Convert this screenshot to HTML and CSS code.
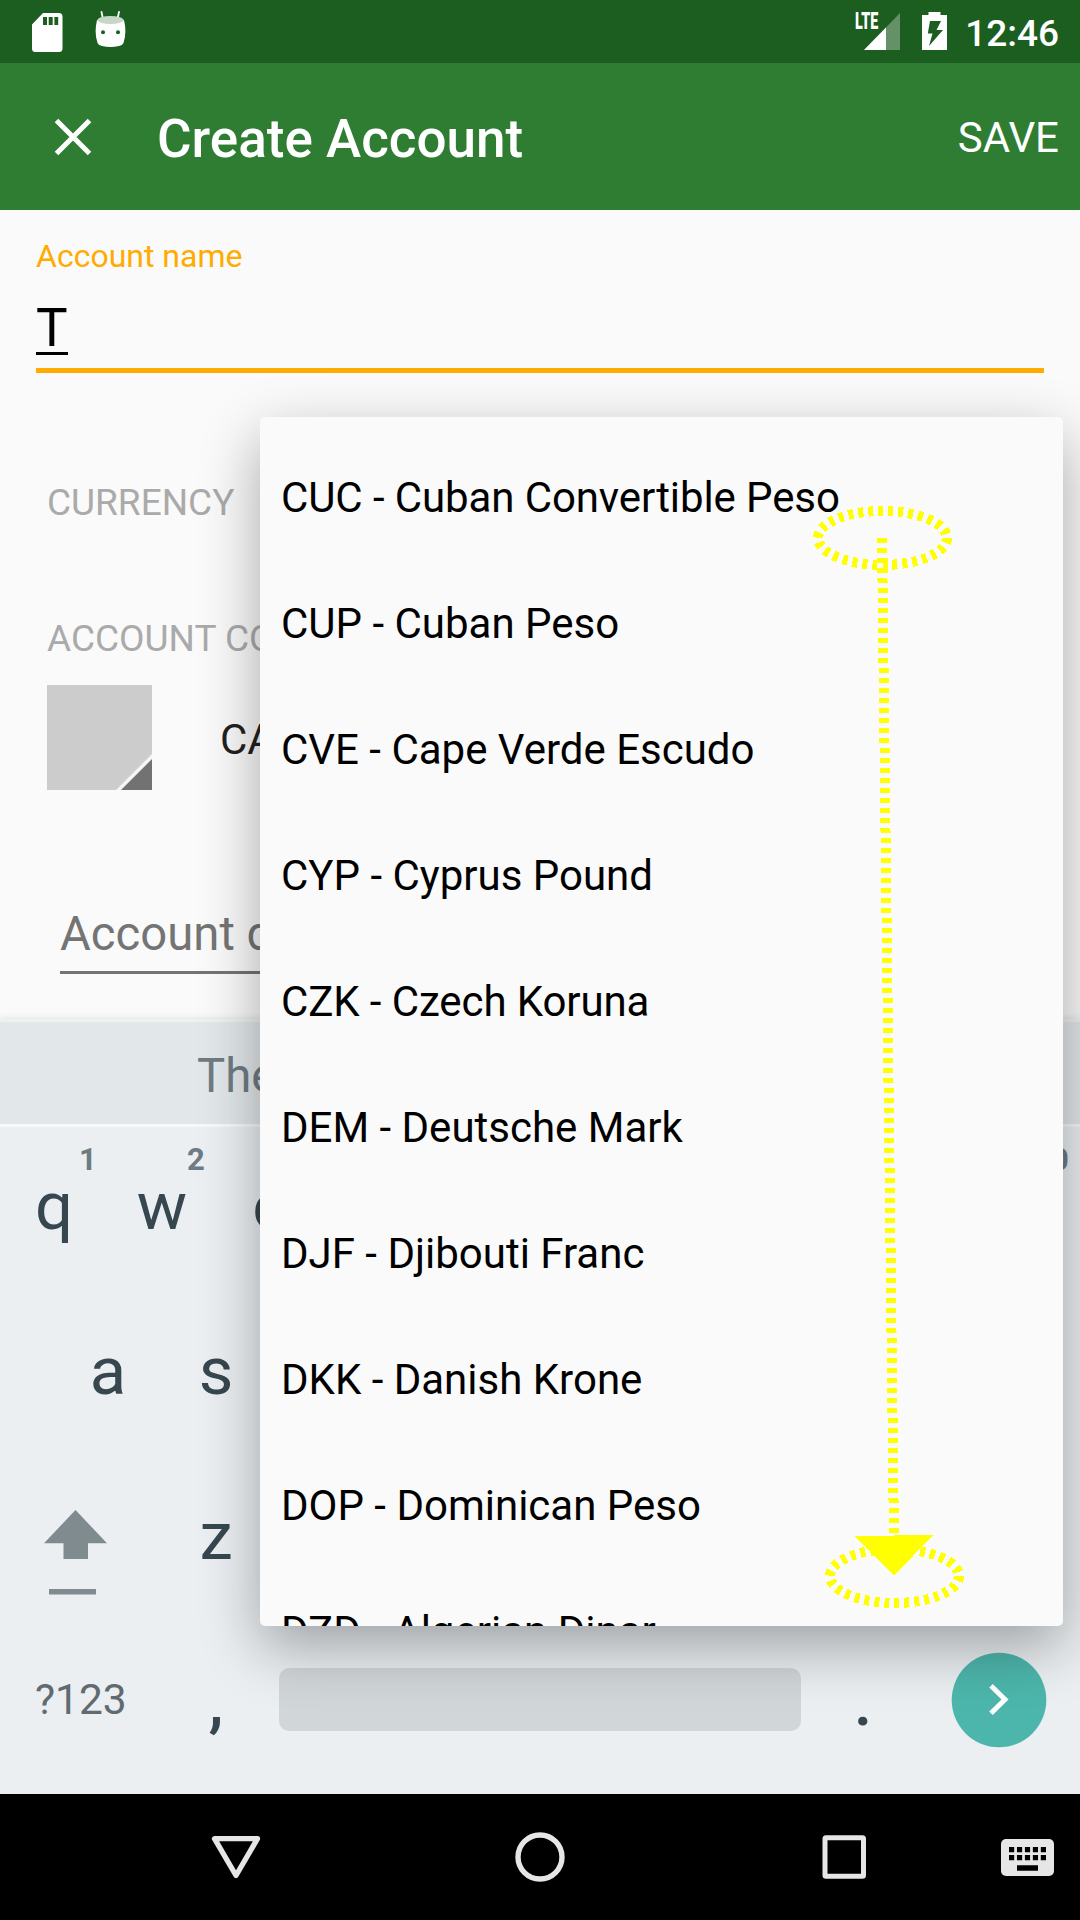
FILE: index.html
```html
<!DOCTYPE html>
<html lang="en">
<head>
<meta charset="utf-8">
<title>Create Account</title>
<link rel="stylesheet" href="styles.css">
</head>
<body>
<div class="screen">
  <header class="status">
    <div class="status-group notifications">
      <svg width="31" height="39" viewBox="0 0 31 39"><path fill="#fff" fill-rule="evenodd" d="M11 0H27Q30.500 0 30.500 3.500V35.500Q30.500 39 27 39H3.500Q0 39 0 35.500V11.500ZM11 4V12H15V4ZM16.700 4V12H20.700V4ZM22.400 4V12H26.200V4Z"/></svg>
      <svg width="31" height="37" viewBox="0 0 31 37"><path d="M6.500 1L8 8M24 1L22.500 8" stroke="#fff" stroke-width="1.800" stroke-linecap="round"/><path fill="#fff" d="M2 9Q15.500 14 29 9Q32 22 28.500 32Q27.500 34.500 24 35Q15.500 37 7 35Q3.500 34.500 2.500 32Q-1 22 2 9Z"/><ellipse cx="15.500" cy="9" rx="13" ry="4" fill="#c6d7c7"/><circle cx="8" cy="21.300" r="2" fill="#1b5e20"/><circle cx="23" cy="21.300" r="2" fill="#1b5e20"/></svg>
    </div>
    <div class="status-group system">
      <div class="signal">
        <svg width="36" height="37" viewBox="0 0 36 37"><path fill="#649167" d="M36 0V37H0Z"/><path fill="#fff" d="M22 14.400V37H0Z"/></svg>
        <span class="lte">LTE</span>
      </div>
      <svg class="battery" width="25" height="38" viewBox="0 0 25 38"><path fill="#fff" d="M6.500 0H18.500V3H25V38H0V3H6.500Z"/><path fill="#1b5e20" d="M8 9H19L14.500 18H21L7 34L10.500 21.500H5.800Z"/></svg>
      <span class="clock">12:46</span>
    </div>
  </header>

  <nav class="appbar">
    <svg class="close" width="38" height="38" viewBox="0 0 38 38"><path d="M2.500 2.500L35.500 35.500M35.500 2.500L2.500 35.500" stroke="#fff" stroke-width="5"/></svg>
    <h1 class="title">Create Account</h1>
    <span class="save">SAVE</span>
  </nav>

  <main class="form">
    <label class="name-label">Account name</label>
    <div class="name-field"><span class="name-value">T</span></div>
    <div class="section currency">CURRENCY</div>
    <div class="section color-label">ACCOUNT CO</div>
    <div class="type-row">
      <svg class="swatch" width="105" height="105" viewBox="0 0 105 105"><path fill="#ccc" d="M0 0H105V105H0Z"/><path fill="#f5f5f5" d="M105 69V105H69Z"/><path fill="#727272" d="M105 74V105H74Z"/></svg>
      <span class="type">CA</span>
    </div>
    <div class="description">Account d</div>
  </main>

  <section class="keyboard">
    <div class="suggestions"><span>The</span></div>
    <div class="keys row-q">
      <span class="key">q<sup>1</sup></span><span class="key">w<sup>2</sup></span><span class="key">e</span><span class="key last"><sup>0</sup></span>
    </div>
    <div class="keys row-a">
      <span class="key">a</span><span class="key">s</span>
    </div>
    <div class="keys row-z">
      <svg class="shift" width="162" height="90" viewBox="0 0 162 90"><path fill="#808b8f" d="M75.500 0L107 33.300H88V49H63.500V33.300H44ZM49 79H96V84.500H49Z"/></svg>
      <span class="key">z</span>
    </div>
    <div class="row-space">
      <span class="symbols">?123</span>
      <span class="key punct">,</span>
      <span class="space"></span>
      <span class="key punct">.</span>
      <svg class="enter" width="96" height="96" viewBox="0 0 96 96"><circle cx="48" cy="48" r="47.300" fill="#4db6ac"/><path d="M40 33.700L54 47.500L40 61.300" fill="none" stroke="#fff" stroke-width="5"/></svg>
    </div>
  </section>

  <footer class="navbar">
    <svg width="1080" height="126" viewBox="0 0 1080 126" fill="none" stroke="#e6e6e6">
      <path d="M214.500 44.700H257.500L236 81.500Z" stroke-width="5.300" stroke-linejoin="round"/>
      <circle cx="540" cy="63" r="22" stroke-width="5.400"/>
      <rect x="825" y="43.700" width="38.500" height="38.500" rx="1" stroke-width="5"/>
      <rect x="1001" y="45" width="53" height="37" rx="5" fill="#e6e6e6" stroke="none"/>
      <path stroke="#000" stroke-width="5.300" stroke-dasharray="5.200 2.750" d="M1009 55.700H1046.200M1009 63.700H1046.200"/>
      <path stroke="#000" stroke-width="5.500" d="M1017 74H1038"/>
    </svg>
  </footer>

  <ul class="popup">
    <li class="long">CUC - Cuban Convertible Peso</li>
    <li>CUP - Cuban Peso</li>
    <li>CVE - Cape Verde Escudo</li>
    <li>CYP - Cyprus Pound</li>
    <li class="long">CZK - Czech Koruna</li>
    <li>DEM - Deutsche Mark</li>
    <li>DJF - Djibouti Franc</li>
    <li>DKK - Danish Krone</li>
    <li>DOP - Dominican Peso</li>
    <li>DZD - Algerian Dinar</li>
  </ul>

  <svg class="gesture" width="160" height="1110" viewBox="810 503 160 1110" fill="none" stroke="#ff0" stroke-width="10" shape-rendering="crispEdges">
    <ellipse cx="882.500" cy="538" rx="64.500" ry="27" stroke-dasharray="5 5"/>
    <ellipse cx="894.500" cy="1576" rx="64.500" ry="27" stroke-dasharray="5 5"/>
    <path d="M882 538L894 1540" stroke-dasharray="5 5"/>
    <path d="M878 558H888V573H878Z" fill="#ff0" stroke="none"/>
    <path d="M878 563H883V568H878Z" fill="#fafafa" stroke="none"/>
    <path d="M854 1536L933 1535L894 1576Z" fill="#ff0" stroke="none"/>
  </svg>
</div>
</body>
</html>
```
FILE: styles.css
```css
* { box-sizing: border-box; }
body { margin: 0; font-family: Roboto, sans-serif; }
svg { display: block; flex: none; }

.screen {
  position: relative;
  width: 1080px;
  height: 1920px;
  overflow: hidden;
  display: flex;
  flex-direction: column;
  background: #fafafa;
}

/* Status bar */
.status {
  height: 63px;
  display: flex;
  justify-content: space-between;
  background: #1b5e20;
  padding: 0 21px 0 32px;
  color: #fff;
}
.status-group { display: flex; align-items: flex-start; }
.notifications { gap: 32px; padding-top: 11px; }
.notifications svg:first-child { margin-top: 1.500px; }
.signal { position: relative; margin: 13px 22px 0 0; }
.lte {
  position: absolute;
  left: -9px;
  top: -2px;
  font-size: 23px;
  line-height: 22px;
  font-weight: 900;
  transform: scaleX(.62);
  transform-origin: left;
}
.battery { margin: 12px 18px 0 0; }
.clock { font-size: 37px; line-height: 43px; font-weight: 500; margin-top: 12px; }

/* App bar */
.appbar {
  height: 147px;
  display: flex;
  align-items: center;
  background: #2e7d32;
  color: #fff;
  padding: 0 21px 0 54px;
}
.close { margin-right: 65px; }
.title { margin: 4px 0 0; font-size: 53px; line-height: 62px; font-weight: 500; flex: 1; }
.save { font-size: 42px; line-height: 50px; margin-top: 2px; }

/* Form */
.form { height: 809px; padding: 27px 36px 0; }
.name-label { display: block; font-size: 32px; line-height: 38px; color: #ffab00; }
.name-field {
  height: 98px;
  border-bottom: 5px solid #ffab00;
  padding-top: 25px;
}
.name-value {
  display: inline-block;
  font-size: 53px;
  line-height: 56px;
  height: 54.500px;
  border-bottom: 3px solid #000;
}
.section { font-size: 37px; line-height: 44px; color: #aaa; padding-left: 11px; }
.currency { margin-top: 108px; margin-bottom: 92px; }
.type-row { display: flex; align-items: center; gap: 68px; padding-left: 11px; margin-top: 24px; height: 105px; }
.type { font-size: 42px; line-height: 50px; color: #212121; margin-top: 4px; }
.description {
  font-size: 47.250px;
  line-height: 56px;
  height: 72px;
  padding-top: 4px;
  color: #747474;
  margin: 112px 0 0 24px;
  border-bottom: 3px solid #747474;
}

/* Keyboard */
.keyboard {
  height: 775px;
  background: #ebeff2;
  border-top: 3px solid #eff1f2;
  box-shadow: 0 0 8px rgba(0, 0, 0, .12);
}
.suggestions {
  height: 105px;
  background: #e2e7ea;
  border-bottom: 3px solid #f6f8f9;
  color: #6f7b82;
  font-size: 47.250px;
  line-height: 108px;
  padding-left: 197px;
}
.keys { display: flex; height: 165px; }
.key {
  position: relative;
  width: 108px;
  text-align: center;
  font-size: 67px;
  line-height: 78px;
  color: #37474f;
}
.key sup {
  position: absolute;
  right: 11px;
  top: -25px;
  width: 18px;
  font-size: 31px;
  line-height: 36px;
  font-weight: 700;
  color: #6f7b82;
}
.last { margin-left: auto; }
.row-q { padding-top: 40px; }
.row-a { padding: 40px 54px 0; }
.row-z { padding-top: 40px; }
.shift { margin-top: 13px; }
.row-space { display: flex; align-items: flex-start; height: 172px; }
.symbols { width: 162px; padding: 53px 0 0 35px; font-size: 42.500px; line-height: 50px; color: #5f6b71; }
.punct { padding-top: 41px; font-weight: 500; }
.space { width: 522px; height: 63px; margin: 46px 8px 0 9px; border-radius: 10px; background: #d1d6d9; }
.enter { margin: 30px 0 0 34px; }

/* Navigation bar */
.navbar { height: 126px; background: #000; }

/* Currency list floating above the form */
.popup {
  position: absolute;
  left: 260px;
  top: 417px;
  width: 803px;
  height: 1209px;
  margin: 0;
  padding: 18px 21px 0;
  list-style: none;
  overflow: hidden;
  border-radius: 5px;
  background: #fafafa;
  box-shadow: 0 21px 60px rgba(0, 0, 0, .33);
}
.popup li { height: 126px; font-size: 42px; line-height: 126px; color: #000; white-space: nowrap; }
.popup .long { letter-spacing: -.1px; }

.gesture { position: absolute; left: 810px; top: 503px; }
```
